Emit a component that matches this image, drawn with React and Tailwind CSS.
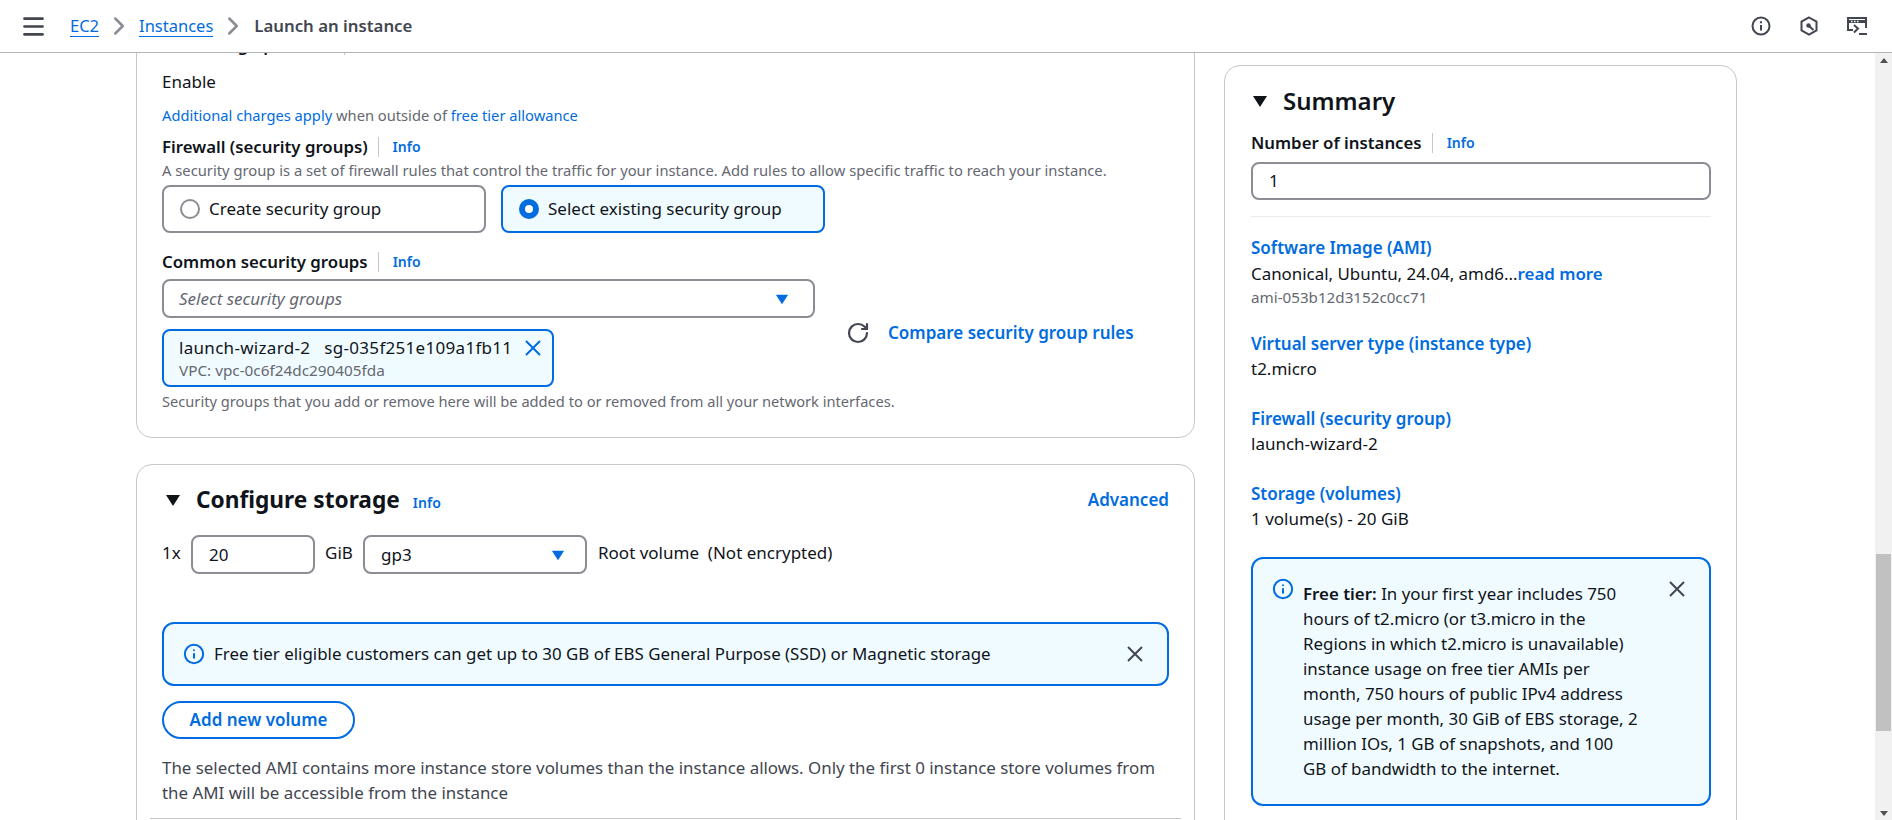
import { Info, RotateCw, Menu, ChevronRight } from 'lucide-react'

const font = { fontFamily: '"Noto Sans", "Open Sans", sans-serif' }

function Caret({ className }) {
  return (
    <svg viewBox="0 0 16 16" className={className} fill="currentColor">
      <path d="M1 3h14L8 14z" />
    </svg>
  )
}

function Close({ className }) {
  return (
    <svg viewBox="0 0 16 16" className={className} fill="none" stroke="currentColor" strokeWidth="2">
      <path d="M1 1l14 14M15 1L1 15" />
    </svg>
  )
}

function Label({ children }) {
  return (
    <div className="flex h-5 items-center text-[16.8px] font-semibold leading-5 text-[#0f141a]">
      <span>{children}</span>
      <span className="ml-[10px] mr-[14px] h-5 w-px bg-[#c6c6cd]"></span>
      <a className="text-[14px] font-semibold text-[#006ce0]">Info</a>
    </div>
  )
}

function Radio({ title, selected }) {
  return (
    <div className={selected
      ? 'flex h-12 w-[324px] items-center rounded-lg border-2 border-[#006ce0] bg-[#f0fbff] pl-4 text-[17px] text-[#0f141a]'
      : 'flex h-12 w-[324px] items-center rounded-lg border-2 border-[#8c8c94] pl-4 text-[17px] text-[#0f141a]'}>
      {selected
        ? <span className="mr-[9px] size-5 rounded-full border-[6px] border-[#006ce0] bg-white"></span>
        : <span className="mr-[9px] size-5 rounded-full border-2 border-[#8c8c94] bg-white"></span>}
      {title}
    </div>
  )
}

function SummaryField({ title, value, className }) {
  return (
    <div className={className}>
      <div className="h-5 text-[17px] font-semibold leading-5 text-[#006ce0]">{title}</div>
      <div className="mt-[5px] h-5 text-[17px] leading-5 text-[#0f141a]">{value}</div>
    </div>
  )
}

function HeaderIcons() {
  return (
    <div className="flex items-center gap-[28px] text-[#424650]">
      <svg viewBox="0 0 20 20" className="size-5" fill="none" stroke="currentColor" strokeWidth="2">
        <circle cx="10" cy="10" r="8.5" />
        <path d="M10 9v5.5M10 5.2v2" />
      </svg>
      <svg viewBox="0 0 20 20" className="size-5" fill="none" stroke="currentColor" strokeWidth="2">
        <path d="M10 1.5l7.5 4.2v8.6L10 18.5l-7.5-4.2V5.7z" />
        <circle cx="9.5" cy="9.5" r="2.2" fill="currentColor" stroke="none" />
        <path d="M9.5 9.5l5 4.5" />
      </svg>
      <svg viewBox="0 0 20 18" className="h-[18px] w-5" fill="none" stroke="currentColor" strokeWidth="2">
        <path d="M6 13H1V1h18v10" />
        <path d="M2 4.5h16" strokeWidth="3" />
        <path d="M4 4.5h1.5M7 4.5h1.5M10 4.5h1.5" stroke="white" strokeWidth="1.4" />
        <path d="M7 8l4 3.5L7 15.5" />
        <path d="M12 17h8" />
      </svg>
    </div>
  )
}

export default function App() {
  return (
    <div style={font} className="flex h-[820px] flex-col overflow-hidden bg-white">
      <header className="flex h-[53px] flex-none items-center border-b border-[#b4b4bb] bg-white pl-[20px] pr-[25px] text-[16.5px] text-[#424650]">
        <Menu className="size-[27px]" strokeWidth={2.4} />
        <a className="ml-[23px] border-b border-[#006ce0] leading-5 text-[#006ce0]">EC2</a>
        <ChevronRight className="mx-[5px] size-[30px] text-[#8c8c94]" strokeWidth={2} />
        <a className="border-b border-[#006ce0] leading-5 text-[#006ce0]">Instances</a>
        <ChevronRight className="ml-[5px] mr-[6px] size-[30px] text-[#8c8c94]" strokeWidth={2} />
        <span className="text-[16.8px] font-semibold">Launch an instance</span>
        <div className="ml-auto"><HeaderIcons /></div>
      </header>

      <div className="flex min-h-0 flex-1">
        <main className="flex min-w-0 flex-1 overflow-hidden pl-[136px]">
          <div className="w-[1059px] flex-none">
            <section className="-mt-[36px] rounded-2xl border border-[#c6c6cd] px-[25px] pb-[28px] pt-[17px]">
              <Label>Auto-assign public IP</Label>
              <div className="mt-[17px] h-5 text-[17px] leading-5 text-[#0f141a]">Enable</div>
              <div className="mt-[13px] h-5 text-[14.7px] leading-5 text-[#656871]">
                <a className="text-[#006ce0]">Additional charges apply</a> when outside of <a className="text-[#006ce0]">free tier allowance</a>
              </div>
              <div className="mt-3"><Label>Firewall (security groups)</Label></div>
              <div className="mt-[5px] h-4 whitespace-nowrap text-[14.75px] leading-4 text-[#656871]">
                A security group is a set of firewall rules that control the traffic for your instance. Add rules to allow specific traffic to reach your instance.
              </div>
              <div className="mt-[7px] flex gap-[15px]">
                <Radio title="Create security group" />
                <Radio title="Select existing security group" selected />
              </div>
              <div className="mt-[19px]"><Label>Common security groups</Label></div>
              <div className="mt-[7px] flex">
                <div className="w-[653px] flex-none">
                  <div className="flex h-[39px] items-center justify-between rounded-lg border-2 border-[#8c8c94] pl-[15px] pr-[24px] text-[17px] italic text-[#656871]">
                    Select security groups
                    <Caret className="size-[14px] text-[#006ce0]" />
                  </div>
                  <div className="mt-[11px] flex h-[58px] w-[392px] justify-between rounded-lg border-2 border-[#006ce0] bg-[#f0fbff] pl-[15px] pr-[11px] pt-[7px]">
                    <div>
                      <div className="h-5 whitespace-pre text-[17px] leading-5 tracking-[0.3px] text-[#0f141a]">launch-wizard-2   sg-035f251e109a1fb11</div>
                      <div className="mt-[4px] h-4 text-[15.3px] leading-4 text-[#656871]">VPC: vpc-0c6f24dc290405fda</div>
                    </div>
                    <Close className="mt-[2px] size-4 flex-none text-[#006ce0]" />
                  </div>
                </div>
                <div className="ml-[31px] flex items-center">
                  <RotateCw className="size-6 text-[#424650]" strokeWidth={2.2} />
                  <a className="ml-[18px] text-[17px] font-semibold text-[#006ce0]">Compare security group rules</a>
                </div>
              </div>
              <div className="mt-[6px] h-4 text-[14.65px] leading-4 text-[#656871]">
                Security groups that you add or remove here will be added to or removed from all your network interfaces.
              </div>
            </section>

            <section className="mt-[26px] rounded-2xl border border-[#c6c6cd] px-[25px] pb-5 pt-5">
              <div className="flex h-[30px] items-center">
                <Caret className="ml-[3px] size-[16px] text-[#0f141a]" />
                <h2 className="ml-[15px] text-[22.7px] font-bold leading-[30px] text-[#0f141a]">Configure storage</h2>
                <a className="ml-[13px] mt-1 text-[14px] font-semibold text-[#006ce0]">Info</a>
                <a className="ml-auto text-[17px] font-semibold text-[#006ce0]">Advanced</a>
              </div>
              <div className="mt-[20px] flex h-[39px] text-[17px] leading-5 text-[#0f141a]">
                <span className="mt-[8px] w-[29px]">1x</span>
                <div className="flex h-[39px] w-[124px] items-center rounded-lg border-2 border-[#8c8c94] pl-4">20</div>
                <span className="ml-[10px] mt-[8px] w-[38px]">GiB</span>
                <div className="flex h-[39px] w-[224px] items-center justify-between rounded-lg border-2 border-[#8c8c94] pl-4 pr-[20px]">
                  gp3
                  <Caret className="size-[14px] text-[#006ce0]" />
                </div>
                <span className="ml-[11px] mt-[8px] whitespace-pre">Root volume  (Not encrypted)</span>
              </div>
              <div className="mt-[48px] flex h-16 items-center rounded-xl border-2 border-[#006ce0] bg-[#f0fbff] pl-[19px] pr-[24px] text-[16.9px] text-[#0f141a]">
                <Info className="size-[22px] text-[#006ce0]" strokeWidth={2.2} />
                <span className="ml-[9px]">Free tier eligible customers can get up to 30 GB of EBS General Purpose (SSD) or Magnetic storage</span>
                <Close className="ml-auto size-4 text-[#424650]" />
              </div>
              <button className="mt-[15px] block h-[38px] w-[193px] rounded-full border-2 border-[#006ce0] text-[17px] font-semibold text-[#006ce0]">Add new volume</button>
              <p className="mt-[16px] text-[16.9px] leading-[25px] text-[#424650]">
                The selected AMI contains more instance store volumes than the instance allows. Only the first 0 instance store volumes from the AMI will be accessible from the instance
              </p>
              <div className="-mx-3 mt-[13px] h-px bg-[#c6c6cd]"></div>
            </section>
          </div>

          <aside className="ml-[29px] mt-3 h-[900px] w-[513px] flex-none rounded-2xl border border-[#c6c6cd] px-[26px] pt-5">
            <div className="flex h-[30px] items-center">
              <Caret className="ml-[1px] size-[16px] text-[#0f141a]" />
              <h2 className="ml-[15px] text-[24px] font-semibold leading-[30px] text-[#0f141a]">Summary</h2>
            </div>
            <div className="mt-[17px]"><Label>Number of instances</Label></div>
            <div className="mt-[9px] flex h-[38px] w-[460px] items-center rounded-lg border-2 border-[#8c8c94] pl-4 text-[17px] text-[#0f141a]">1</div>
            <div className="mt-4 h-px w-[460px] bg-[#e9ebed]"></div>
            <div className="mt-[21px]">
              <div className="h-5 text-[17px] font-semibold leading-5 text-[#006ce0]">Software Image (AMI)</div>
              <div className="mt-[6px] h-5 text-[16.9px] leading-5 text-[#0f141a]">
                Canonical, Ubuntu, 24.04, amd6...<a className="font-semibold text-[#006ce0]">read more</a>
              </div>
              <div className="mt-[5px] h-4 text-[15.2px] leading-4 text-[#656871]">ami-053b12d3152c0cc71</div>
            </div>
            <SummaryField className="mt-[29px]" title="Virtual server type (instance type)" value="t2.micro" />
            <SummaryField className="mt-[30px]" title="Firewall (security group)" value="launch-wizard-2" />
            <SummaryField className="mt-[30px]" title="Storage (volumes)" value="1 volume(s) - 20 GiB" />
            <div className="mt-[28px] flex h-[249px] w-[460px] rounded-xl border-2 border-[#006ce0] bg-[#f0fbff] pl-[19px] pr-[24px] pt-[20px]">
              <Info className="-mt-[1px] size-[22px] flex-none text-[#006ce0]" strokeWidth={2.2} />
              <p className="ml-[9px] mt-[2px] w-[336px] text-[16.9px] leading-[25px] text-[#0f141a]">
                <b className="font-semibold">Free tier:</b> In your first year includes 750 hours of t2.micro (or t3.micro in the Regions in which t2.micro is unavailable) instance usage on free tier AMIs per month, 750 hours of public IPv4 address usage per month, 30 GiB of EBS storage, 2 million IOs, 1 GB of snapshots, and 100 GB of bandwidth to the internet.
              </p>
              <Close className="ml-auto mt-[2px] size-4 flex-none text-[#424650]" />
            </div>
          </aside>
        </main>

        <div className="flex w-[17px] flex-none flex-col items-center bg-[#f1f1f1]">
          <div className="mt-[5px] h-0 w-0 border-x-[4px] border-b-[5px] border-x-transparent border-b-[#505050]"></div>
          <div className="mt-[491px] h-[177px] w-[15px] bg-[#c1c1c1]"></div>
          <div className="mt-[80px] h-0 w-0 border-x-[4px] border-t-[5px] border-x-transparent border-t-[#505050]"></div>
        </div>
      </div>
    </div>
  )
}
